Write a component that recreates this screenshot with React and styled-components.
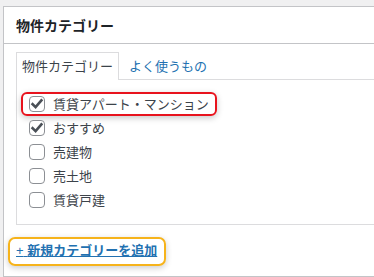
import styled, { createGlobalStyle } from "styled-components";

const GlobalStyle = createGlobalStyle`
    body {
        margin: 0;
        background: #f0f0f1;
        overflow: hidden;
        font-family: "Noto Sans CJK JP", "Noto Sans", sans-serif;
        color: #3c434a;
    }
`

const categories = [
    { label: "賃貸アパート・マンション", checked: true, highlight: true },
    { label: "おすすめ", checked: true },
    { label: "売建物", checked: false },
    { label: "売土地", checked: false },
    { label: "賃貸戸建", checked: false },
];

const CheckIcon = () => (
    <svg width="14" height="14" viewBox="0 0 14 14">
        <path d="M2.6 7.2 L5.6 10.2 L11.4 3.4" fill="none" stroke="#4a5057" strokeWidth="2.6" strokeLinecap="square" />
    </svg>
);

export default function App() {
    return (
        <>
            <GlobalStyle />
            <Page>
                <Panel>
                    <Header>
                        <Title>物件カテゴリー</Title>
                    </Header>

                    <Body>
                        <Tabs>
                            <Tab $active>物件カテゴリー</Tab>
                            <Tab>よく使うもの</Tab>
                        </Tabs>

                        <TabPanel>
                            <CategoryList>
                                {categories.map((c) => (
                                    <li key={c.label}>
                                        <CategoryLabel $highlight={c.highlight}>
                                            <CheckBox>{c.checked && <CheckIcon />}</CheckBox>
                                            <span>{c.label}</span>
                                        </CategoryLabel>
                                    </li>
                                ))}
                            </CategoryList>
                        </TabPanel>

                        <AddRow>
                            <AddLink href="#"><Plus>+{"\u00a0"}</Plus>新規カテゴリーを追加</AddLink>
                        </AddRow>
                    </Body>
                </Panel>
            </Page>
        </>
    )
};

const Page = styled.div`
    padding: 6px 0 0 3px;
`

const Panel = styled.section`
    height: 271px;
    box-sizing: border-box;
    background: #fff;
    border: 1px solid #c3c4c7;
    border-right: none;
`

const Header = styled.div`
    height: 36px;
    padding-left: 12px;
    border-bottom: 1px solid #c3c4c7;
    display: flex;
    align-items: center;
`

const Title = styled.h2`
    margin: 0;
    font-size: 14px;
    font-weight: 700;
    line-height: 1;
    color: #1d2327;
`

const Body = styled.div`
    padding: 8px 0 0 12px;
`

const Tabs = styled.ul`
    display: flex;
    gap: 4px;
    margin: 0;
    padding: 0;
    list-style: none;
`

const Tab = styled.li`
    position: relative;
    z-index: 1;
    height: 27px;
    margin-bottom: -1px;
    padding: 0 5px;
    border: 1px solid ${(p) => (p.$active ? "#dcdcde" : "transparent")};
    border-bottom: none;
    background: ${(p) => (p.$active ? "#fff" : "transparent")};
    color: ${(p) => (p.$active ? "#3c434a" : "#2271b1")};
    font-size: 13px;
    line-height: 25px;
`

const TabPanel = styled.div`
    border: 1px solid #dcdcde;
    border-right: none;
    padding: 12px;
`

const CategoryList = styled.ul`
    margin: 0;
    padding: 0;
    list-style: none;

    li {
        height: 24px;
        display: flex;
        align-items: center;
    }
`

const CategoryLabel = styled.label`
    position: relative;
    display: inline-flex;
    align-items: center;
    gap: 8px;
    font-size: 13px;
    line-height: 16px;
    color: #3c434a;

    &::after {
        content: "";
        display: ${(p) => (p.$highlight ? "block" : "none")};
        position: absolute;
        inset: -4px -8px -4px -8px;
        border: 2px solid #e8131d;
        border-radius: 6px;
        box-shadow: 0 2px 6px rgba(0, 0, 0, 0.22);
        pointer-events: none;
    }
`

const CheckBox = styled.span`
    width: 16px;
    height: 16px;
    box-sizing: border-box;
    border: 1px solid #8c8f94;
    border-radius: 4px;
    background: #fff;
    display: flex;
    align-items: center;
    justify-content: center;
`

const AddRow = styled.div`
    padding-top: 11px;
`

const AddLink = styled.a`
    position: relative;
    display: inline-block;
    font-size: 13px;
    font-weight: 600;
    line-height: 16px;
    color: #2271b1;
    text-decoration: underline;

    &::after {
        content: "";
        position: absolute;
        inset: -5px -9px -7px -8px;
        border: 2px solid #f6b31b;
        border-radius: 7px;
        box-shadow: 0 2px 6px rgba(0, 0, 0, 0.2);
        pointer-events: none;
    }
`

const Plus = styled.span`
    font-family: "Liberation Sans", Arial, sans-serif;
    font-weight: 400;
`
